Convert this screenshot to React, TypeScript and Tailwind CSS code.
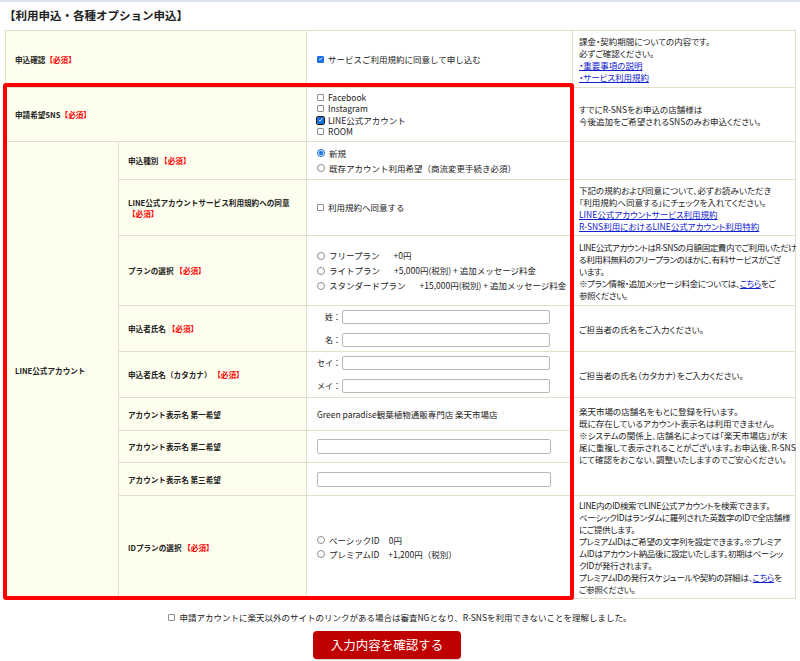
import React from 'react'

const line = 'border border-[#e2e0cb]'
const label = `${line} bg-[#fefeee] px-[9px] align-middle font-bold text-[7.6px] leading-[11px] text-[#222] whitespace-nowrap`
const value = `${line} bg-white pl-[10px] pr-[6px] align-middle`
const note = `${line} bg-white px-[6px] align-middle whitespace-nowrap leading-[12px] [font-feature-settings:'palt']`
const link = 'text-[#1122cc] underline'

function Req() {
  return <span className="text-[#ff0000]">【必須】</span>
}

function Check({ checked = false, focus = false }: { checked?: boolean; focus?: boolean }) {
  const box = checked
    ? 'border-[#1a6fe0] bg-[#1a6fe0]'
    : 'border-[#8d8d8d] bg-white'
  return (
    <span
      className={
        `flex h-[7px] w-[7px] shrink-0 items-center justify-center rounded-[1px] border ${box} ` +
        (focus ? 'outline-[1.5px] outline-[#1b1b1b] outline-offset-[0.5px]' : '')
      }
    >
      {checked && (
        <svg viewBox="0 0 7 7" className="h-[6px] w-[6px]">
          <path d="M1.2 3.6 L2.8 5.1 L5.8 1.6" fill="none" stroke="#fff" strokeWidth="1.2" />
        </svg>
      )}
    </span>
  )
}

function Radio({ checked = false }: { checked?: boolean }) {
  return checked ? (
    <span className="flex h-[8px] w-[8px] shrink-0 items-center justify-center rounded-full border border-[#1a6fe0] bg-[#cfe0fa]">
      <span className="h-[4px] w-[4px] rounded-full bg-[#1a6fe0]" />
    </span>
  ) : (
    <span className="h-[8px] w-[8px] shrink-0 rounded-full border border-[#8d8d8d] bg-white" />
  )
}

function Opt({ children }: { children: React.ReactNode }) {
  return <div className="flex items-center gap-[4px] whitespace-nowrap">{children}</div>
}

function NameField({ label }: { label: string }) {
  return (
    <div className="flex items-center">
      <span className="w-[24px] text-right text-[8px]">{label}：</span>
      <input type="text" className="ml-[1px] h-[14px] w-[208px] rounded-[2px] border border-[#b8b8b8] bg-white" />
    </div>
  )
}

export default function App() {
  return (
    <div className="relative min-h-[661px] bg-white font-['Noto_Sans_CJK_JP','Noto_Sans',sans-serif] text-[8.5px] text-[#222]">
      <div className="h-[2px] bg-[#dde4ee]" />
      <h2 className="flex h-[28px] items-center pl-[4px] text-[11.5px] font-bold text-[#222]">
        【利用申込・各種オプション申込】
      </h2>

      <table className="ml-[5px] w-[790px] table-fixed border-collapse border border-[#e2e0cb]">
        <colgroup>
          <col className="w-[113px]" />
          <col className="w-[188px]" />
          <col className="w-[266px]" />
          <col className="w-[223px]" />
        </colgroup>
        <tbody>
          <tr className="h-[57px]">
            <td colSpan={2} className={label}>
              申込確認<Req />
            </td>
            <td className={value}>
              <Opt>
                <Check checked />
                サービスご利用規約に同意して申し込む
              </Opt>
            </td>
            <td className={`${note} leading-[11.5px]`}>
              課金・契約期間についての内容です。
              <br />
              必ずご確認ください。
              <br />
              <a className={link}>・重要事項の説明</a>
              <br />
              <a className={link}>・サービス利用規約</a>
            </td>
          </tr>

          <tr className="h-[54px]">
            <td colSpan={2} className={label}>
              申請希望SNS<Req />
            </td>
            <td className={value}>
              <div className="flex flex-col leading-[11.5px]">
                <Opt>
                  <Check />
                  Facebook
                </Opt>
                <Opt>
                  <Check />
                  Instagram
                </Opt>
                <Opt>
                  <Check checked focus />
                  LINE公式アカウント
                </Opt>
                <Opt>
                  <Check />
                  ROOM
                </Opt>
              </div>
            </td>
            <td className={note}>
              すでにR-SNSをお申込の店舗様は
              <br />
              今後追加をご希望されるSNSのみお申込ください。
            </td>
          </tr>

          <tr className="h-[38px]">
            <td rowSpan={9} className={label}>
              LINE公式アカウント
            </td>
            <td className={label}>
              申込種別 <Req />
            </td>
            <td className={value}>
              <div className="flex flex-col gap-[4px] leading-[11px]">
                <Opt>
                  <Radio checked />
                  新規
                </Opt>
                <Opt>
                  <Radio />
                  既存アカウント利用希望（商流変更手続き必須）
                </Opt>
              </div>
            </td>
            <td className={note} />
          </tr>

          <tr className="h-[56px]">
            <td className={label}>
              LINE公式アカウントサービス利用規約への同意
              <br />
              <Req />
            </td>
            <td className={value}>
              <Opt>
                <Check />
                利用規約へ同意する
              </Opt>
            </td>
            <td className={note}>
              下記の規約および同意について、必ずお読みいただき
              <br />
              「利用規約へ同意する」にチェックを入れてください。
              <br />
              <a className={link}>LINE公式アカウントサービス利用規約</a>
              <br />
              <a className={link}>R-SNS利用におけるLINE公式アカウント利用特約</a>
            </td>
          </tr>

          <tr className="h-[70px]">
            <td className={label}>
              プランの選択 <Req />
            </td>
            <td className={value}>
              <div className="flex flex-col gap-[4px] leading-[11px]">
                <Opt>
                  <Radio />
                  フリープラン<span className="ml-[10px]">+0円</span>
                </Opt>
                <Opt>
                  <Radio />
                  ライトプラン<span className="ml-[10px]">+5,000円(税別) + 追加メッセージ料金</span>
                </Opt>
                <Opt>
                  <Radio />
                  スタンダードプラン<span className="ml-[10px]">+15,000円(税別) + 追加メッセージ料金</span>
                </Opt>
              </div>
            </td>
            <td className={`${note} leading-[12.5px] tracking-[-0.4px]`}>
              LINE公式アカウントはR-SNSの月額固定費内でご利用いただけ
              <br />
              る利用料無料のフリープランのほかに、有料サービスがござ
              <br />
              います。
              <br />
              ※プラン情報・追加メッセージ料金については、<a className={link}>こちら</a>をご
              <br />
              参照ください。
            </td>
          </tr>

          <tr className="h-[46px]">
            <td className={label}>
              申込者氏名 <Req />
            </td>
            <td className={`${value} pl-[2px]`}>
              <div className="flex flex-col gap-[9px]">
                <NameField label="姓" />
                <NameField label="名" />
              </div>
            </td>
            <td className={note}>ご担当者の氏名をご入力ください。</td>
          </tr>

          <tr className="h-[46px]">
            <td className={label}>
              申込者氏名（カタカナ） <Req />
            </td>
            <td className={`${value} pl-[2px]`}>
              <div className="flex flex-col gap-[9px]">
                <NameField label="セイ" />
                <NameField label="メイ" />
              </div>
            </td>
            <td className={note}>ご担当者の氏名（カタカナ）をご入力ください。</td>
          </tr>

          <tr className="h-[33px]">
            <td className={label}>アカウント表示名 第一希望</td>
            <td className={`${value} pl-[8px] whitespace-nowrap`}>Green paradise観葉植物通販専門店 楽天市場店</td>
            <td rowSpan={3} className={`${note} pb-[24px]`}>
              楽天市場の店舗名をもとに登録を行います。
              <br />
              既に存在しているアカウント表示名は利用できません。
              <br />
              ※システムの関係上、店舗名によっては「楽天市場店」が末
              <br />
              尾に重複して表示されることがございます。お申込後、R-SNS
              <br />
              にて確認をおこない、調整いたしますのでご安心ください。
            </td>
          </tr>

          <tr className="h-[32px]">
            <td className={label}>アカウント表示名 第二希望</td>
            <td className={`${value} pl-[8px]`}>
              <input type="text" className="block h-[15px] w-[234px] rounded-[2px] border border-[#b8b8b8] bg-white" />
            </td>
          </tr>

          <tr className="h-[33px]">
            <td className={label}>アカウント表示名 第三希望</td>
            <td className={`${value} pl-[8px]`}>
              <input type="text" className="block h-[15px] w-[234px] rounded-[2px] border border-[#b8b8b8] bg-white" />
            </td>
          </tr>

          <tr className="h-[103px]">
            <td className={label}>
              IDプランの選択 <Req />
            </td>
            <td className={value}>
              <div className="flex flex-col gap-[3px] leading-[11px]">
                <Opt>
                  <Radio />
                  ベーシックID<span className="ml-[5px]">0円</span>
                </Opt>
                <Opt>
                  <Radio />
                  プレミアムID<span className="ml-[5px]">+1,200円（税別）</span>
                </Opt>
              </div>
            </td>
            <td className={`${note} tracking-[-0.3px]`}>
              LINE内のID検索でLINE公式アカウントを検索できます。
              <br />
              ベーシックIDはランダムに羅列された英数字のIDで全店舗様
              <br />
              にご提供します。
              <br />
              プレミアムIDはご希望の文字列を設定できます。※プレミア
              <br />
              ムIDはアカウント納品後に設定いたします。初期はベーシッ
              <br />
              クIDが発行されます。
              <br />
              プレミアムIDの発行スケジュールや契約の詳細は、<a className={link}>こちら</a>を
              <br />
              ご参照ください。
            </td>
          </tr>
        </tbody>
      </table>

      {/* annotation frame drawn over the LINE section */}
      <div className="pointer-events-none absolute left-[3px] top-[83px] h-[517px] w-[571px] rounded-[3px] border-4 border-[#ff0000]" />

      <div className="mt-[12px] flex items-center justify-center gap-[4px] leading-[12px]">
        <Check />
        申請アカウントに楽天以外のサイトのリンクがある場合は審査NGとなり、R-SNSを利用できないことを理解しました。
      </div>

      <div className="mt-[8px] pl-[313px]">
        <button
          type="button"
          className="h-[28px] w-[148px] rounded-[4px] bg-[#c00000] text-[12.5px] text-white shadow-[0_1px_1px_rgba(0,0,0,0.2)]"
        >
          入力内容を確認する
        </button>
      </div>
    </div>
  )
}
